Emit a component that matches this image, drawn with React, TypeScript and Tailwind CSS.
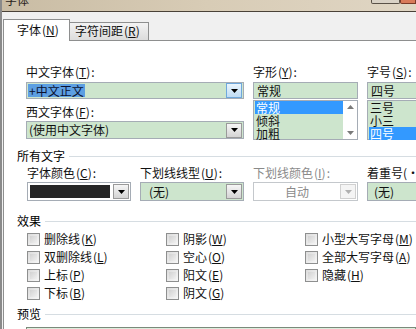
import React from "react";

const Key = ({ k }: { k: string }) => (
  <span className="mx-[1px]">
    (<span className="underline underline-offset-1">{k}</span>)
  </span>
);

const Arrow = ({ color = "#000" }: { color?: string }) => (
  <svg width="7" height="4" viewBox="0 0 7 4">
    <path d="M0 0h7L3.5 4z" fill={color} />
  </svg>
);

const DropBtn = ({ hot, disabled }: { hot?: boolean; disabled?: boolean }) => (
  <div
    className={`w-[16px] h-[15px] flex items-center justify-center border ${
      hot
        ? "border-[#6fa8dc] bg-gradient-to-b from-[#eaf5fd] to-[#bfdcf4]"
        : disabled
        ? "border-[#d0d0d0] bg-[#f4f4f4]"
        : "border-[#9a9a9a] bg-gradient-to-b from-[#f6f6f6] to-[#d4d4d4]"
    }`}
  >
    <Arrow color={disabled ? "#b0b0b0" : "#000"} />
  </div>
);

const Heading = ({ children }: { children: React.ReactNode }) => (
  <div className="flex items-center h-[14px] pl-[13px]">
    <span className="text-[12px] leading-[14px] text-black pr-[4px]">{children}</span>
    <div className="flex-1 h-px bg-[#d6dde2]" />
  </div>
);

const Check = ({ label, k }: { label: string; k: string }) => (
  <div className="flex items-center h-[18px] gap-[4px]">
    <div className="w-[13px] h-[13px] border border-[#8e8f8f] bg-gradient-to-br from-[#dcdcdc] to-[#f7f7f7] p-[2px]">
      <div className="w-full h-full bg-gradient-to-br from-[#d2d2d2] to-[#f0f0f0]" />
    </div>
    <span className="text-[12px] leading-[14px]">
      {label}
      <Key k={k} />
    </span>
  </div>
);

export default function App() {
  return (
    <div className="w-[416px] h-[329px] overflow-hidden bg-[#f0f0f0] font-['Noto_Sans_CJK_SC',sans-serif] text-[#111] border-l-2 border-[#8a8a8a]">
      {/* title bar */}
      <div className="relative h-[12px] overflow-hidden bg-gradient-to-r from-[#c9bca4] via-[#d8ccb6] to-[#e0d6c4] border-b border-[#4a4238]">
        <div className="-mt-[7px] pl-[3px] text-[12px] leading-[14px] text-[#2a241c]">字体</div>
        <div className="absolute right-0 top-0 flex">
          <div className="w-[29px] h-[4px] border border-t-0 border-[#5a5248] rounded-b-[2px] bg-[#d9d2c6]" />
          <div className="w-[16px] h-[4px] border border-t-0 border-[#7a3a28] rounded-bl-[2px] bg-[#d97a5a]" />
        </div>
      </div>

      {/* tabs */}
      <div className="h-[28px] flex items-end pl-[1px]">
        <div className="h-[22px] w-[67px] bg-white border border-b-0 border-[#8e8f8f] -mb-px relative z-10 pl-[13px] pt-[3px] text-[12px] leading-[14px]">
          字体<Key k="N" />
        </div>
        <div className="h-[18px] w-[79px] border border-l-0 border-b-0 border-[#8e8f8f] bg-gradient-to-b from-[#f3f3f3] to-[#dcdcdc] pl-[5px] pt-[1px] text-[12px] leading-[14px]">
          字符间距<Key k="R" />
        </div>
      </div>

      {/* panel */}
      <div className="ml-[1px] h-[300px] bg-white border-l border-t border-[#8e8f8f] pt-[24px]">
        {/* font pickers */}
        <div className="grid grid-cols-[218px_105px_1fr] gap-x-[9px] pl-[22px] text-[12px] leading-[14px]">
          <div className="flex flex-col">
            <div className="h-[14px]">中文字体<Key k="T" />:</div>
            <div className="mt-[3px] h-[17px] border border-[#a5acb5] bg-[#cde5cd] flex items-center pr-[1px]">
              <span className="ml-[1px] px-[1px] bg-[#5d9fe2] text-[#0b1230] leading-[13px]">+中文正文</span>
              <div className="flex-1" />
              <DropBtn hot />
            </div>
            <div className="mt-[6px] h-[14px]">西文字体<Key k="F" />:</div>
            <div className="mt-[2px] h-[18px] border border-[#a5acb5] bg-[#cde5cd] flex items-center pr-[1px]">
              <span className="flex-1 pl-[2px]">(使用中文字体)</span>
              <DropBtn />
            </div>
          </div>

          <div className="flex flex-col">
            <div className="h-[14px]">字形<Key k="Y" />:</div>
            <div className="mt-[3px] h-[17px] border border-[#a5acb5] bg-[#cde5cd] flex items-center pl-[3px]">常规</div>
            <div className="mt-[1px] h-[40px] border border-[#a5acb5] bg-[#cde5cd] flex">
              <div className="flex-1 flex flex-col pl-[1px] leading-[13px] text-[12px]">
                <div className="bg-[#3399ff] text-white pl-[1px]">常规</div>
                <div className="pl-[1px]">倾斜</div>
                <div className="pl-[1px]">加粗</div>
              </div>
              <div className="w-[14px] bg-white flex flex-col justify-between items-center py-[4px]">
                <svg width="7" height="4" viewBox="0 0 7 4">
                  <path d="M3.5 0L7 4H0z" fill="#7a7a7a" />
                </svg>
                <Arrow color="#7a7a7a" />
              </div>
            </div>
          </div>

          <div className="flex flex-col">
            <div className="h-[14px] whitespace-nowrap">字号<Key k="S" />:</div>
            <div className="mt-[3px] h-[17px] border border-r-0 border-[#a5acb5] bg-[#cde5cd] flex items-center pl-[3px]">四号</div>
            <div className="mt-[1px] h-[40px] border border-r-0 border-[#a5acb5] bg-[#cde5cd] flex flex-col pl-[1px] leading-[13px] text-[12px]">
              <div className="pl-[1px]">三号</div>
              <div className="pl-[1px]">小三</div>
              <div className="bg-[#3399ff] text-white pl-[1px]">四号</div>
            </div>
          </div>
        </div>

        {/* all text */}
        <div className="mt-[9px]">
          <Heading>所有文字</Heading>
        </div>
        <div className="mt-[3px] grid grid-cols-[104px_104px_105px_1fr] gap-x-[9px] pl-[23px] text-[12px] leading-[14px] whitespace-nowrap">
          <div className="flex flex-col">
            <div className="h-[14px]">字体颜色<Key k="C" />:</div>
            <div className="mt-[2px] h-[19px] border border-[#a5acb5] bg-white flex items-center pl-[2px] pr-[1px] gap-[3px]">
              <div className="w-[80px] h-[13px] bg-[#262626]" />
              <DropBtn />
            </div>
          </div>
          <div className="flex flex-col">
            <div className="h-[14px]">下划线线型<Key k="U" />:</div>
            <div className="mt-[2px] h-[19px] border border-[#a5acb5] bg-[#cde5cd] flex items-center pr-[1px]">
              <span className="flex-1 pl-[8px]">(无)</span>
              <DropBtn />
            </div>
          </div>
          <div className="flex flex-col text-[#8a8a8a]">
            <div className="h-[14px]">下划线颜色<Key k="I" />:</div>
            <div className="mt-[2px] h-[19px] border border-[#c4c8cc] bg-white flex items-center pr-[1px]">
              <span className="flex-1 text-center">自动</span>
              <DropBtn disabled />
            </div>
          </div>
          <div className="flex flex-col">
            <div className="h-[14px]">着重号(·):</div>
            <div className="mt-[2px] h-[19px] border border-r-0 border-[#a5acb5] bg-[#cde5cd] flex items-center pl-[6px]">(无)</div>
          </div>
        </div>

        {/* effects */}
        <div className="mt-[13px]">
          <Heading>效果</Heading>
        </div>
        <div className="mt-[2px] grid grid-cols-[139px_139px_1fr] pl-[23px]">
          <div className="flex flex-col">
            <Check label="删除线" k="K" />
            <Check label="双删除线" k="L" />
            <Check label="上标" k="P" />
            <Check label="下标" k="B" />
          </div>
          <div className="flex flex-col">
            <Check label="阴影" k="W" />
            <Check label="空心" k="O" />
            <Check label="阳文" k="E" />
            <Check label="阴文" k="G" />
          </div>
          <div className="flex flex-col whitespace-nowrap">
            <Check label="小型大写字母" k="M" />
            <Check label="全部大写字母" k="A" />
            <Check label="隐藏" k="H" />
          </div>
        </div>

        {/* preview */}
        <div className="mt-[5px]">
          <Heading>预览</Heading>
        </div>
        <div className="mt-[6px] ml-[22px] h-[20px] border border-[#7a8a7a] bg-[#dcecdc]" />
      </div>
    </div>
  );
}
